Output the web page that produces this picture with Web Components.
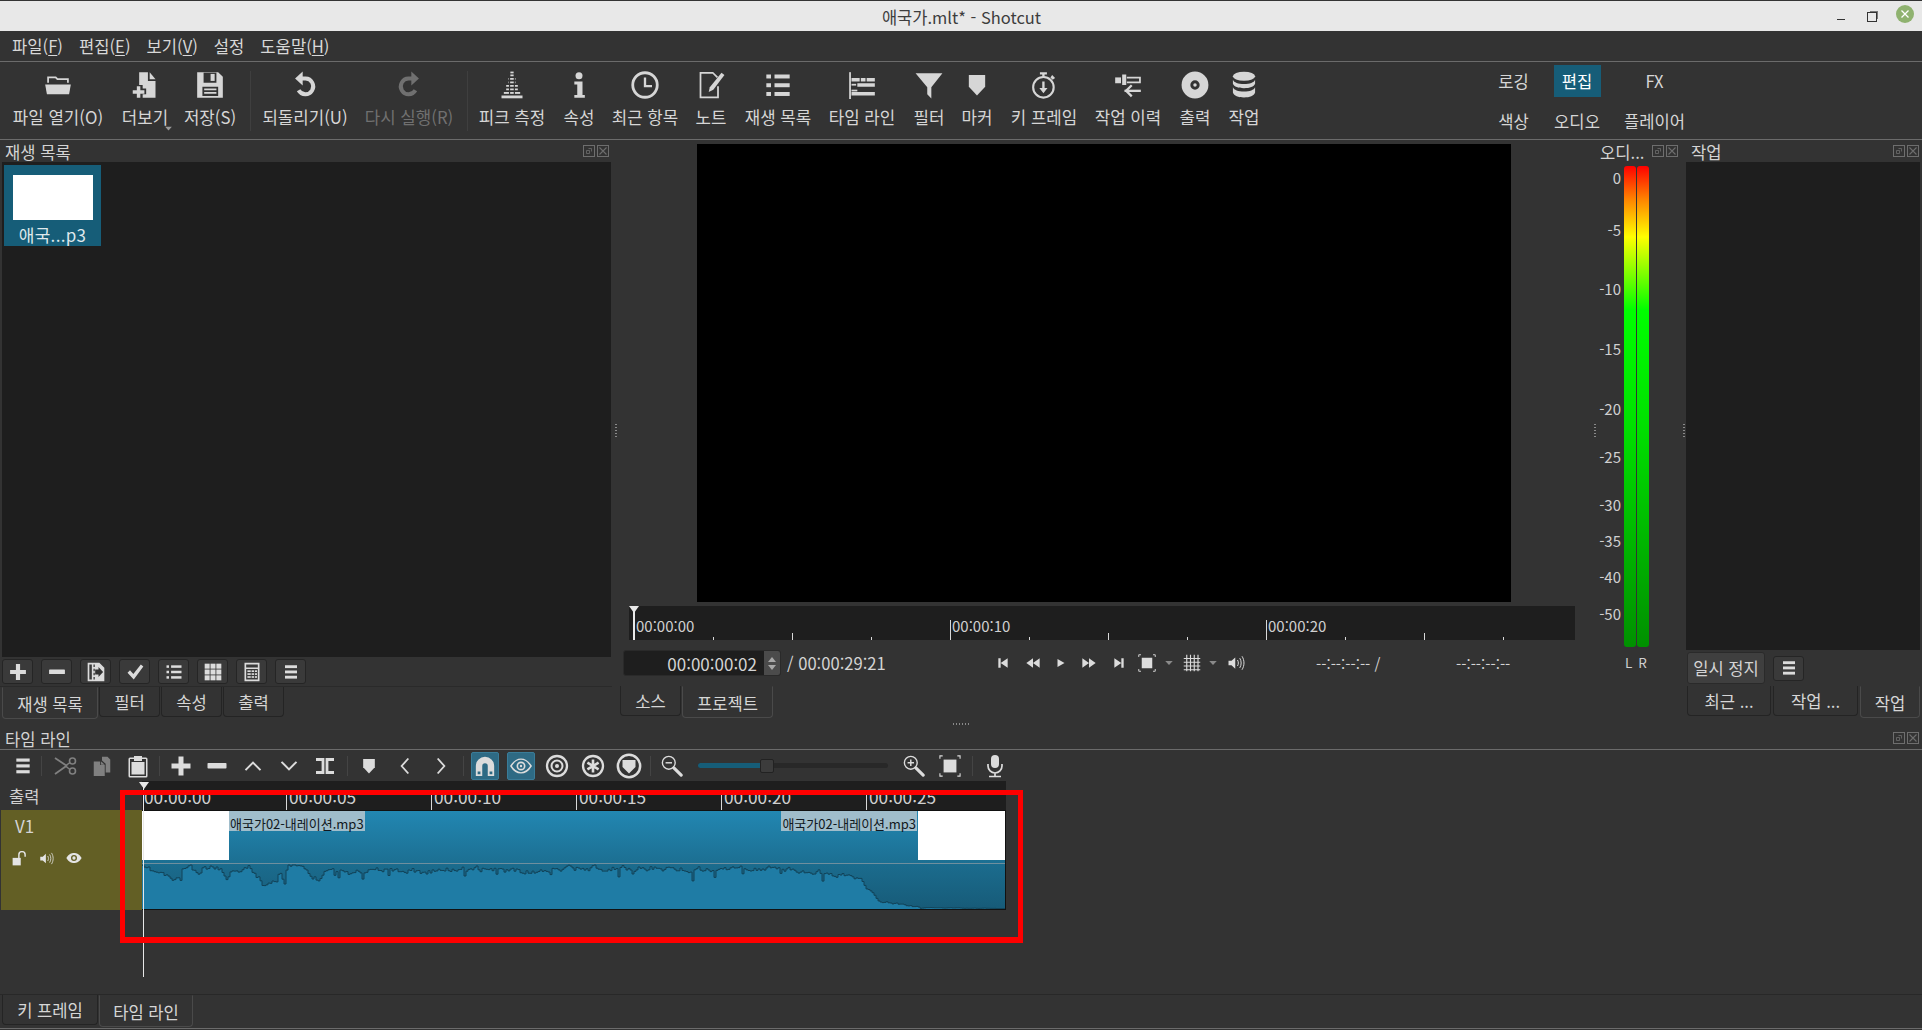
<!DOCTYPE html>
<html lang="ko">
<head>
<meta charset="utf-8">
<title>애국가.mlt* - Shotcut</title>
<style>
  html, body { margin: 0; padding: 0; background: #333; }
  body { width: 1922px; height: 1030px; overflow: hidden; font: 16.6px "Noto Sans CJK KR", "Noto Sans", sans-serif; color: #d4d4d4; }
</style>
</head>
<body>
<shot-app></shot-app>

<script>
// icons on a 24 box, currentColor
const rects = list => list.map(r => `<rect x="${r[0]}" y="${r[1]}" width="${r[2]}" height="${r[3]}"/>`).join('');
const ICONS = {
  folder: '<path d="M3.5 10V5.5h6.5l1.5 1.5h9V10" fill="none" stroke="currentColor" stroke-width="1.5"/><path d="M1 11.5h22l-1.5 8.5h-19z"/>',
  fileadd: '<path d="M7 1h7.5v7.5H21V23H10v-3h3v-5h-3v-3H7z"/><path d="M16 1l5 6h-5z"/><path d="M5 13h3v3.5h3.5v3H8V23H5v-3.500H1.500v-3H5z"/>',
  save: '<path fill-rule="evenodd" d="M1 1h18l4 4v18H1zM6.500 1.500V10h11V1.500zM5.500 13.500V21.500h13.500V13.500z"/><rect x="12.500" y="2.500" width="3.500" height="6"/><rect x="7" y="15" width="10.500" height="1.500"/><rect x="7" y="18" width="10.500" height="1.500"/>',
  undo: '<path d="M9 6.500h3.500a6.700 6.700 0 1 1-6 10" fill="none" stroke="currentColor" stroke-width="3.400"/><path d="M10 0.500V12.500L3.500 6.500z"/>',
  redo: '<g transform="matrix(-1 0 0 1 24 0)"><path d="M9 6.500h3.500a6.700 6.700 0 1 1-6 10" fill="none" stroke="currentColor" stroke-width="3.400"/><path d="M10 0.500V12.500L3.500 6.500z"/></g>',
  peak: rects([[3,21,18,2.400],[5,18,14,1.600],[7,15,10,1.500],[7,12,10,1.500],[9,9,6,1.500],[9,6,6,1.500],[10.600,3,2.800,1.500],[10.600,0.500,2.800,1.500]]) + '<g fill="#333"><rect x="9.400" y="5" width="1" height="15"/><rect x="13.500" y="5" width="1" height="15"/></g>',
  info: '<circle cx="12" cy="4" r="3"/><path d="M8 9h7v11.500h2V23H8v-2.500h2.500v-9H8z"/>',
  clock: '<circle cx="12" cy="12" r="10.500" fill="none" stroke="currentColor" stroke-width="2.400"/><path d="M12 5.500V13h6" fill="none" stroke="currentColor" stroke-width="2"/>',
  note: '<path d="M18 13v9.500H3V1.500h10.500l4 4" fill="none" stroke="currentColor" stroke-width="1.500"/><path d="M21 1.500l2.500 2L14 16l-4 2 1-4z"/>',
  playlist: rects([[2,3,4,3.400],[9,3,13,3.400],[2,10.500,4,3.400],[9,10.500,13,3.400],[2,18,4,3.400],[9,18,13,3.400]]),
  timeline: rects([[1,1,1.500,23],[3,6,7,3],[11,6,4,3],[16,6,7,3],[3,11,4,1.500],[8,10.500,15,3],[3,16,5,1.500],[3,18,20,3]]),
  filter: '<path d="M0.500 2h23L14 14v9.500L10.500 20v-6z"/>',
  marker: '<path d="M5 3.500h14v10l-7 7.500-7-7.500z"/>',
  stopwatch: '<circle cx="11.500" cy="14" r="8.800" fill="none" stroke="currentColor" stroke-width="1.800"/><path d="M8.500 1h6v2h-2v2h-2V3h-2zM19 3.500l2.500 2.500-2 1.500-2-2z"/><path d="M10.500 9h2v5.500H15L11.500 19 8 14.500h2.500z"/>',
  history: '<path d="M1 5.500h5v5H1z"/><path d="M7 3h3.500v9H7z"/><path d="M11 5h12v1.500H11zM11 9h12v1.500H11zM23 5v5.500h-1.500V5z"/><path d="M9 16h14v2H9z"/><path d="M14.500 11.500l1.400 1.400L11.800 17l4.100 4.100-1.400 1.400L9 17z"/>',
  disc: '<path fill-rule="evenodd" d="M12 0.500a11.500 11.500 0 1 0 0 23a11.500 11.500 0 1 0 0-23zM12 8a4 4 0 1 1 0 8a4 4 0 1 1 0-8z"/><circle cx="12" cy="12" r="1.500"/>',
  jobs: '<ellipse cx="12" cy="4.500" rx="9.500" ry="3.800"/><path d="M2.500 7.500c1 2.500 4.500 3.600 9.500 3.600s8.500-1.100 9.500-3.600v3.500c-1 2.600-4.500 3.800-9.500 3.800S3.500 13.600 2.500 11z"/><path d="M2.500 14c1 2.500 4.500 3.600 9.500 3.600s8.500-1.100 9.500-3.600v4.500c-1 3-4.500 4.200-9.500 4.200s-8.500-1.200-9.500-4.200z"/>',
  plus: '<path d="M9.500 2.500h5v7h7v5h-7v7h-5v-7h-7v-5h7z"/>',
  minus: '<rect x="2.500" y="9" width="19" height="5.500" rx="0.800"/>',
  menu: rects([[4,3,16,3.800],[4,10,16,3.800],[4,17,16,3.800]]),
  update: '<path fill-rule="evenodd" d="M2 1h14l6 6v16H2zM4 3v18h3V3z"/><g fill="#333"><path d="M9 3h1.500v3H9zM9 8h1.500v3H9zM9 13h1.500v3H9zM9 18h1.500v3H9z"/><path d="M11 9h4V6l5.500 6-5.500 6v-3h-4z"/></g>',
  check: '<path d="M3 13l3-3 4 4.500L19 3l3 2.500L10.500 21z"/>',
  list: rects([[3,4,3,3],[8.500,4,12.500,3],[3,10.500,3,3],[8.500,10.500,12.500,3],[3,17,3,3],[8.500,17,12.500,3]]),
  grid3: rects([[2,2,6,6],[9,2,6,6],[16,2,6,6],[2,9,6,6],[9,9,6,6],[16,9,6,6],[2,16,6,6],[9,16,6,6],[16,16,6,6]]),
  table: '<path fill-rule="evenodd" d="M3 1h18v22H3zM5 3v3.500h14V3zM5 8.500V21h14V8.500z"/>' + rects([[6.500,10,4,2],[11.500,10,3,2],[15.500,10,2.500,2],[6.500,13.500,4,2],[11.500,13.500,3,2],[15.500,13.500,2.500,2],[6.500,17,4,2],[11.500,17,3,2],[15.500,17,2.500,2]]),
  first: '<path d="M4 4h4v16H4zM20 4v16L8 12z"/>',
  rewind: '<path d="M12 5v14L2 12zM22 5v14l-10-7z"/>',
  play: '<path d="M6 5l12 7-12 7z"/>',
  ff: '<path d="M2 5l10 7-10 7zM12 5l10 7-10 7z"/>',
  last: '<path d="M4 4l12 8-12 8zM16 4h4v16h-4z"/>',
  fit: '<rect x="5" y="5" width="14" height="14"/><path d="M1 4V1h3M20 1h3v3M23 20v3h-3M4 23H1v-3" fill="none" stroke="currentColor" stroke-width="1.200"/>',
  lines: '<path d="M1 6h22M1 11h22M1 16h22M1 21h22M5 1v22M10 1v22M15 1v22M20 1v22" fill="none" stroke="currentColor" stroke-width="1.500"/>',
  volume: '<path d="M2 9h4l5-4.500v15L6 15H2z"/><path d="M14 8c1.500 2.500 1.500 5.500 0 8M17 5.500c2.500 4 2.500 9 0 13M20 3c3.500 5.500 3.500 12.500 0 18" fill="none" stroke="currentColor" stroke-width="1.300"/>',
  caret: '<path d="M3 7h18l-9 10z"/>',
  scissors: '<path d="M1 4l12 8M1 20l12-8.500" fill="none" stroke="currentColor" stroke-width="1.800"/><circle cx="18.500" cy="7" r="3" fill="none" stroke="currentColor" stroke-width="1.600"/><circle cx="18.500" cy="17" r="3" fill="none" stroke="currentColor" stroke-width="1.600"/><path d="M12 11.500l4-3M12 12.500l4 3" fill="none" stroke="currentColor" stroke-width="1.500"/>',
  copy: '<path d="M3 7h7v4h5v12H3z"/><path d="M11 7l4 3.500h-4z"/><path d="M12 2h6l3 3v14h-5V9.500L12 6z"/>',
  paste: '<path fill-rule="evenodd" d="M4 3.500h4V2h8v1.500h4a1.500 1.500 0 0 1 1.500 1.500v17a1.500 1.500 0 0 1-1.500 1.500H4A1.500 1.500 0 0 1 2.500 22V5A1.500 1.500 0 0 1 4 3.500zM4 5v17h16V5h-4v2H8V5z"/><rect x="5.500" y="8" width="13" height="12.500"/>',
  up: '<path d="M3 17l9-9 9 9" fill="none" stroke="currentColor" stroke-width="2.400"/>',
  down: '<path d="M3 7l9 9 9-9" fill="none" stroke="currentColor" stroke-width="2.400"/>',
  left: '<path d="M16 3l-8 9 8 9" fill="none" stroke="currentColor" stroke-width="2.200"/>',
  right: '<path d="M8 3l8 9-8 9" fill="none" stroke="currentColor" stroke-width="2.200"/>',
  split: '<path d="M3 5.500h7v13H3M21 5.500h-7v13h7" fill="none" stroke="currentColor" stroke-width="2.800"/>',
  magnet: '<path fill-rule="evenodd" d="M2 12a10 10 0 0 1 20 0v11h-7V12a3 3 0 0 0-6 0v11H2z"/><g fill="#2e6a84"><rect x="4" y="18" width="3" height="3"/><rect x="17" y="18" width="3" height="3"/></g>',
  ripple: '<path d="M1 12c4-6.500 7.500-7.500 11-7.500s7 1 11 7.500c-4 6.500-7.500 7.500-11 7.500S5 18.500 1 12z" fill="none" stroke="currentColor" stroke-width="1.600"/><circle cx="12" cy="12" r="4" fill="none" stroke="currentColor" stroke-width="1.800"/><circle cx="12" cy="12" r="1.300"/>',
  target: '<circle cx="12" cy="12" r="10" fill="none" stroke="currentColor" stroke-width="2.300"/><circle cx="12" cy="12" r="5.500" fill="none" stroke="currentColor" stroke-width="2"/><circle cx="12" cy="12" r="2"/>',
  asterisk: '<circle cx="12" cy="12" r="10" fill="none" stroke="currentColor" stroke-width="2.300"/><path d="M12 5.500v13M6.400 8.700l11.200 6.600M6.400 15.300l11.200-6.600" fill="none" stroke="currentColor" stroke-width="2.600"/>',
  shieldring: '<circle cx="12" cy="12" r="10.300" fill="none" stroke="currentColor" stroke-width="2.300"/><path d="M6 6.500h12v6.500l-6 6-6-6z"/>',
  zoomout: '<circle cx="8.500" cy="8.500" r="7" fill="none" stroke="currentColor" stroke-width="1.500"/><rect x="5" y="7.700" width="7" height="1.600"/><path d="M14 14l8 8" stroke="currentColor" stroke-width="3.400" stroke-linecap="round"/>',
  zoomin: '<circle cx="8.500" cy="8.500" r="7" fill="none" stroke="currentColor" stroke-width="1.500"/><path d="M5 7.700h2.700V5h1.600v2.700H12v1.600H9.300V12H7.700V9.300H5z"/><path d="M14 14l8 8" stroke="currentColor" stroke-width="3.400" stroke-linecap="round"/>',
  mic: '<rect x="8" y="1" width="8" height="13" rx="4"/><path d="M5 10v2a7 7 0 0 0 14 0v-2M12 19v3M6 22.500h12" fill="none" stroke="currentColor" stroke-width="1.700"/>',
  lock: '<rect x="1" y="11" width="13" height="12"/><path d="M11 11V6a5 5 0 0 1 10 0v3" fill="none" stroke="currentColor" stroke-width="2.300"/>',
  eye: '<path fill-rule="evenodd" d="M0.500 12C4 6 8 4.500 12 4.500S20 6 23.500 12C20 18 16 19.500 12 19.500S4 18 0.500 12zM12 7.500a4.500 4.500 0 1 0 0 9a4.500 4.500 0 1 0 0-9z"/><circle cx="12" cy="12" r="2.500"/>',
  float: '<rect x="0.500" y="0.500" width="11" height="11" fill="none" stroke="currentColor"/><path d="M3.500 5.500h3v3h-3zM5.500 3.500h3v3" fill="none" stroke="currentColor" stroke-width="0.800"/>',
  close: '<rect x="0.500" y="0.500" width="11" height="11" fill="none" stroke="currentColor"/><path d="M2.500 2.500l7 7M9.500 2.500l-7 7" fill="none" stroke="currentColor" stroke-width="1.100"/>'
};

class ShotIcon extends HTMLElement {
  connectedCallback() {
    const size = this.getAttribute('size') || 24;
    const box = this.getAttribute('box') || 24;
    this.attachShadow({mode: 'open'}).innerHTML = `
      <style>:host { display: inline-flex; line-height: 0; } svg { fill: currentColor; }</style>
      <svg width="${size}" height="${size}" viewBox="0 0 ${box} ${box}">${ICONS[this.getAttribute('name')] || ''}</svg>`;
  }
}
customElements.define('shot-icon', ShotIcon);

class TitleBar extends HTMLElement {
  constructor() {
    super();
    this.attachShadow({mode: 'open'}).innerHTML = `
      <style>
        :host { display: grid; grid-template-columns: 1fr auto 1fr; align-items: center; height: 30px; border-top: 1px solid #333; background: #e8e8e8; color: #3d3d3d; font-size: 16.5px; padding-left: 1px; }
        .text { grid-column: 2; position: relative; top: 1px; }
        .btns { grid-column: 3; display: flex; justify-content: flex-end; align-items: center; gap: 12px; padding-right: 8px; }
        .min { width: 8px; height: 1px; background: #333; margin: 7px 10px 0 0; }
        .max { width: 8px; height: 8px; border: 1px solid #333; box-shadow: 2px -2px 0 -1px #777; margin: 2px 3px 0 0; }
        .close { width: 18px; height: 18px; border-radius: 50%; background: #8fb26f; color: #fff; display: grid; place-items: center; margin-left: 4px; margin-top: -4px; }
      </style>
      <span class="text"><slot></slot></span>
      <div class="btns">
        <div class="min"></div><div class="max"></div>
        <div class="close"><svg width="10" height="10" viewBox="0 0 10 10"><path d="M1.500 1.500l7 7M8.500 1.500l-7 7" stroke="#fff" stroke-width="1.300"/></svg></div>
      </div>`;
  }
}
customElements.define('title-bar', TitleBar);

class MenuBar extends HTMLElement {
  constructor() {
    super();
    this.attachShadow({mode: 'open'}).innerHTML = `
      <style>
        :host { display: flex; height: 30px; align-items: center; padding-left: 12px; gap: 16px; border-bottom: 1px solid #6b6b6b; font-size: 16.6px; color: #d8d8d8; }
        u { text-underline-offset: 2px; }
      </style>
      <span>파일(<u>F</u>)</span><span>편집(<u>E</u>)</span><span>보기(<u>V</u>)</span><span>설정</span><span>도움말(<u>H</u>)</span>`;
  }
}
customElements.define('menu-bar', MenuBar);

class ToolItem extends HTMLElement {
  constructor() {
    super();
    const off = this.hasAttribute('disabled');
    const more = this.hasAttribute('more');
    this.attachShadow({mode: 'open'}).innerHTML = `
      <style>
        :host { display: flex; flex-direction: column; align-items: center; padding-top: 9px; position: relative; color: ${off ? '#707070' : '#d6d6d6'}; font-size: 16.8px; white-space: nowrap; }
        .lbl { height: 20px; line-height: 20px; margin-top: 8px; }
        .caret { position: absolute; left: 50px; top: 62px; color: #9a9a9a; }
      </style>
      <shot-icon name="${this.getAttribute('icon')}" size="28"></shot-icon>
      <span class="lbl">${this.getAttribute('label')}</span>
      ${more ? '<shot-icon class="caret" name="caret" size="9"></shot-icon>' : ''}`;
  }
}
customElements.define('tool-item', ToolItem);

class ToolSep extends HTMLElement {
  constructor() {
    super();
    this.attachShadow({mode: 'open'}).innerHTML = `
      <style>:host { display: flex; justify-content: center; padding-top: 9px; height: 60px; } i { width: 1px; background: #3f3f3f; }</style><i></i>`;
  }
}
customElements.define('tool-sep', ToolSep);

class MainToolbar extends HTMLElement {
  constructor() {
    super();
    this.attachShadow({mode: 'open'}).innerHTML = `
      <style>
        :host { display: grid; height: 77px; padding-left: 2px; border-bottom: 1px solid #6b6b6b;
          grid-template-columns: 112px 62px 68px 12px 98px 110px 6px 84px 50px 82px 50px 84px 84px 50px 46px 88px 80px 54px 44px 223.500px auto; }
        .persp { display: grid; grid-template-columns: 48px 47px 76px; grid-auto-rows: 32px; column-gap: 16px; row-gap: 8px; padding-top: 3px; font-size: 16.6px; color: #d6d6d6; }
        .persp span { display: grid; place-items: center; white-space: nowrap; }
        .persp .on { background: #165d78; color: #fff; }
      </style>
      <tool-item icon="folder" label="파일 열기(O)"></tool-item>
      <tool-item icon="fileadd" label="더보기" more></tool-item>
      <tool-item icon="save" label="저장(S)"></tool-item>
      <tool-sep></tool-sep>
      <tool-item icon="undo" label="되돌리기(U)"></tool-item>
      <tool-item icon="redo" label="다시 실행(R)" disabled></tool-item>
      <tool-sep></tool-sep>
      <tool-item icon="peak" label="피크 측정"></tool-item>
      <tool-item icon="info" label="속성"></tool-item>
      <tool-item icon="clock" label="최근 항목"></tool-item>
      <tool-item icon="note" label="노트"></tool-item>
      <tool-item icon="playlist" label="재생 목록"></tool-item>
      <tool-item icon="timeline" label="타임 라인"></tool-item>
      <tool-item icon="filter" label="필터"></tool-item>
      <tool-item icon="marker" label="마커"></tool-item>
      <tool-item icon="stopwatch" label="키 프레임"></tool-item>
      <tool-item icon="history" label="작업 이력"></tool-item>
      <tool-item icon="disc" label="출력"></tool-item>
      <tool-item icon="jobs" label="작업"></tool-item>
      <div></div>
      <div class="persp">
        <span>로깅</span><span class="on">편집</span><span>FX</span>
        <span>색상</span><span>오디오</span><span>플레이어</span>
      </div>`;
  }
}
customElements.define('main-toolbar', MainToolbar);

class DockTitle extends HTMLElement {
  constructor() {
    super();
    this.attachShadow({mode: 'open'}).innerHTML = `
      <style>
        :host { display: flex; align-items: center; justify-content: space-between; height: 20px; padding: 2px 3px 0 5px; font-size: 16.6px; color: #d4d4d4; }
        .ic { display: flex; gap: 2px; color: #6e6e6e; margin-top: -2px; }
      </style>
      <slot></slot>
      <span class="ic"><shot-icon name="float" size="12" box="12"></shot-icon><shot-icon name="close" size="12" box="12"></shot-icon></span>`;
  }
}
customElements.define('dock-title', DockTitle);

class TabBar extends HTMLElement {
  constructor() {
    super();
    this.attachShadow({mode: 'open'}).innerHTML = `
      <style>:host { display: flex; gap: 1px; align-items: flex-start; height: 32px; }</style><slot></slot>`;
  }
}
customElements.define('tab-bar', TabBar);

class TabItem extends HTMLElement {
  constructor() {
    super();
    const w = this.getAttribute('w');
    const on = this.hasAttribute('active');
    this.attachShadow({mode: 'open'}).innerHTML = `
      <style>
        :host { display: grid; place-items: center; box-sizing: border-box; width: ${w}px; height: ${on ? 32 : 30}px; padding-top: ${on ? 1 : 0}px; font-size: 16.6px; color: #d6d6d6;
          border: 1px solid ${on ? '#4a4a4a' : '#242424'}; border-top: ${on ? '1px solid #333' : '0'}; border-radius: 0 0 4px 4px; white-space: nowrap; }
      </style><slot></slot>`;
  }
}
customElements.define('tab-item', TabItem);

class SquareBtn extends HTMLElement {
  constructor() {
    super();
    const s = this.getAttribute('size') || 20;
    this.attachShadow({mode: 'open'}).innerHTML = `
      <style>
        :host { display: grid; place-items: center; box-sizing: border-box; width: 31px; height: 25px; background: #3a3a3a; border: 1px solid #252525; border-radius: 3px; color: #dcdcdc; }
      </style>
      <shot-icon name="${this.getAttribute('icon')}" size="${s}"></shot-icon>`;
  }
}
customElements.define('square-btn', SquareBtn);

class PlaylistDock extends HTMLElement {
  constructor() {
    super();
    this.attachShadow({mode: 'open'}).innerHTML = `
      <style>
        :host { display: flex; flex-direction: column; height: 580px; }
        .list { box-sizing: border-box; height: 495px; margin: 0 1px 0 2px; background: #1e1e1e; padding: 3px 0 0 2px; }
        .thumb { width: 97px; height: 81px; background: #165d78; display: flex; flex-direction: column; align-items: center; color: #dfe8ec; font-size: 17px; }
        .thumb i { display: block; width: 80px; height: 45px; margin-top: 10px; background: #fff; }
        .thumb span { margin-top: 5px; line-height: 20px; letter-spacing: 0.3px; }
        .btns { display: flex; gap: 8px; height: 27px; padding: 2px 0 0 2px; border-bottom: 1px solid #2a2a2a; }
        tab-bar { padding-left: 2px; }
      </style>
      <dock-title>재생 목록</dock-title>
      <div class="list"><div class="thumb"><i></i><span>애국...p3</span></div></div>
      <div class="btns">
        <square-btn icon="plus"></square-btn><square-btn icon="minus"></square-btn><square-btn icon="update"></square-btn><square-btn icon="check"></square-btn>
        <square-btn icon="list"></square-btn><square-btn icon="grid3"></square-btn><square-btn icon="table"></square-btn><square-btn icon="menu" size="18"></square-btn>
      </div>
      <tab-bar><tab-item w="96" active>재생 목록</tab-item><tab-item w="61">필터</tab-item><tab-item w="61">속성</tab-item><tab-item w="61">출력</tab-item></tab-bar>`;
  }
}
customElements.define('playlist-dock', PlaylistDock);

class ScrubRuler extends HTMLElement {
  constructor() {
    super();
    let marks = '';
    for (let i = 0; i < 12; i++) {
      const x = 5 + i * 79;
      const h = i % 4 === 0 ? 20 : (i % 2 === 0 ? 7 : 3);
      marks += `<i style="left:${x}px;height:${h}px"></i>`;
      if (i % 4 === 0) marks += `<span style="left:${x + 2}px">00:00:${String(i * 2.5).padStart(2, '0')}</span>`;
    }
    this.attachShadow({mode: 'open'}).innerHTML = `
      <style>
        :host { display: block; position: relative; height: 34px; background: #1e1e1e; margin: 0 16px 0 9px; overflow: hidden; }
        i { position: absolute; bottom: 0; width: 1px; background: #d8d8d8; }
        span { position: absolute; top: 10px; font-size: 15px; line-height: 20px; color: #d0d0d0; }
        .head { position: absolute; left: 4px; top: 0; width: 2px; height: 34px; background: #e8e8e8; }
        .tri { position: absolute; left: 0px; top: 0; width: 0; height: 0; border-left: 5px solid transparent; border-right: 5px solid transparent; border-top: 7px solid #e8e8e8; }
      </style>${marks}<b class="head"></b><b class="tri"></b>`;
  }
}
customElements.define('scrub-ruler', ScrubRuler);

class PlayerPanel extends HTMLElement {
  constructor() {
    super();
    this.attachShadow({mode: 'open'}).innerHTML = `
      <style>
        :host { display: flex; flex-direction: column; height: 580px; padding-top: 4px; box-sizing: border-box; }
        .video { width: 814px; height: 458px; background: #000; margin: 0 0 4px 77px; }
        .ctl { display: flex; align-items: center; height: 26px; margin-top: 10px; color: #d4d4d4; }
        .tc { box-sizing: border-box; display: flex; width: 158px; height: 26px; margin-left: 3px; background: #1e1e1e; border: 1px solid #2a2a2a; border-radius: 3px; align-items: center; justify-content: flex-end; overflow: hidden; }
        .tc b { font-weight: normal; padding-right: 7px; font-size: 17px; }
        .spin { width: 16px; height: 100%; background: #4b4b4b; display: flex; flex-direction: column; align-items: center; justify-content: center; gap: 3px; }
        .spin i { width: 0; height: 0; border-left: 4px solid transparent; border-right: 4px solid transparent; }
        .spin .u { border-bottom: 5px solid #a8a8a8; } .spin .d { border-top: 5px solid #a8a8a8; }
        .dur { width: 207px; padding-left: 6px; box-sizing: border-box; font-size: 16.6px; white-space: nowrap; }
        .tr { display: grid; grid-template-columns: 30px 29px 27px 30px 30px 26px 18px 27px 16px 30px; justify-items: center; align-items: center; color: #dcdcdc; }
        .tr .c { color: #8a8a8a; }
        .t1 { margin-left: 65px; width: 140px; font-size: 15px; white-space: nowrap; }
        .t2 { font-size: 15px; }
        tab-bar { margin-top: 10px; }
      </style>
      <div class="video"></div>
      <scrub-ruler></scrub-ruler>
      <div class="ctl">
        <div class="tc"><b>00:00:00:02</b><div class="spin"><i class="u"></i><i class="d"></i></div></div>
        <div class="dur">/ 00:00:29:21</div>
        <div class="tr">
          <shot-icon name="first" size="14"></shot-icon><shot-icon name="rewind" size="16"></shot-icon><shot-icon name="play" size="14"></shot-icon><shot-icon name="ff" size="16"></shot-icon><shot-icon name="last" size="14"></shot-icon>
          <shot-icon name="fit" size="18"></shot-icon><shot-icon class="c" name="caret" size="10"></shot-icon><shot-icon name="lines" size="18"></shot-icon><shot-icon class="c" name="caret" size="10"></shot-icon><shot-icon name="volume" size="18"></shot-icon>
        </div>
        <div class="t1">--:--:--:-- /</div><div class="t2">--:--:--:--</div>
      </div>
      <tab-bar><tab-item w="61">소스</tab-item><tab-item w="91" active>프로젝트</tab-item></tab-bar>`;
  }
}
customElements.define('player-panel', PlayerPanel);

class AudioMeter extends HTMLElement {
  constructor() {
    super();
    const ticks = [[0,178],[-5,230],[-10,289],[-15,349],[-20,409],[-25,457],[-30,505],[-35,541],[-40,577],[-50,614]];
    const labels = ticks.map(t => `<span style="top:${t[1] - 166 - 10}px">${t[0]}</span>`).join('');
    this.attachShadow({mode: 'open'}).innerHTML = `
      <style>
        :host { display: block; height: 580px; }
        .scale { position: relative; height: 481px; margin-top: 4px; display: flex; gap: 1px; padding-left: 25px; }
        .scale span { position: absolute; right: 61px; line-height: 20px; font-size: 15px; color: #d0d0d0; }
        .bar { width: 12px; height: 481px; border-radius: 3px;
          background: linear-gradient(#ff0000 0, #ff8a00 35px, #ffff00 71px, #00ff00 144px, #00e000 260px, #009000 481px); }
        .lr { display: flex; gap: 6px; padding-left: 26px; font-size: 13.500px; line-height: 20px; margin-top: 5px; color: #d0d0d0; }
        .title { display: flex; justify-content: space-between; height: 20px; padding: 2px 4px 0 1px; align-items: center; }
        .ic { display: flex; gap: 2px; color: #6e6e6e; margin-top: -2px; }
      </style>
      <div class="title"><span>오디...</span><span class="ic"><shot-icon name="float" size="12" box="12"></shot-icon><shot-icon name="close" size="12" box="12"></shot-icon></span></div>
      <div class="scale">${labels}<div class="bar"></div><div class="bar"></div></div>
      <div class="lr"><span>L</span><span>R</span></div>`;
  }
}
customElements.define('audio-meter', AudioMeter);

class JobsDock extends HTMLElement {
  constructor() {
    super();
    this.attachShadow({mode: 'open'}).innerHTML = `
      <style>
        :host { display: flex; flex-direction: column; height: 580px; }
        .pane { height: 488px; background: #1e1e1e; margin-right: 2px; }
        .row { display: flex; align-items: center; gap: 8px; height: 36px; padding-left: 1px; }
        .pause { box-sizing: border-box; width: 78px; height: 32px; background: #3f3f3f; border: 1px solid #2a2a2a; border-radius: 3px; display: grid; place-items: center; font-size: 16.6px; white-space: nowrap; }
        tab-bar { padding-left: 1px; gap: 2px; }
      </style>
      <dock-title>작업</dock-title>
      <div class="pane"></div>
      <div class="row"><div class="pause">일시 정지</div><square-btn icon="menu" size="18"></square-btn></div>
      <tab-bar><tab-item w="84">최근 ...</tab-item><tab-item w="85">작업 ...</tab-item><tab-item w="60" active>작업</tab-item></tab-bar>`;
  }
}
customElements.define('jobs-dock', JobsDock);

// splitter grip, dots along the axis
class SplitGrip extends HTMLElement {
  constructor() {
    super();
    const v = this.hasAttribute('vertical');
    this.attachShadow({mode: 'open'}).innerHTML = `
      <style>
        :host { display: flex; align-items: center; justify-content: center; }
        i { display: block; width: ${v ? 2 : 16}px; height: ${v ? 14 : 2}px;
          background: repeating-linear-gradient(${v ? '180deg' : '90deg'}, #8a8a8a 0 1px, transparent 1px 3px); }
      </style><i></i>`;
  }
}
customElements.define('split-grip', SplitGrip);

class TimelineToolbar extends HTMLElement {
  constructor() {
    super();
    const ic = (n, s, extra) => `<span class="cell ${extra || ''}"><shot-icon name="${n}" size="${s}"></shot-icon></span>`;
    this.attachShadow({mode: 'open'}).innerHTML = `
      <style>
        :host { display: flex; align-items: center; height: 31px; padding-left: 5px; color: #dcdcdc; background: #333; }
        .cell { width: 36px; display: grid; place-items: center; flex: none; }
        .off { color: #808080; }
        .sep { width: 1px; height: 20px; background: #444; margin: 0 3.500px; flex: none; }
        .on { width: 28px; height: 28px; margin: 0 4px; box-sizing: border-box; background: #2e6a84; border: 1px solid #3a7c98; border-radius: 2px; }
        .on + .on { margin-left: 4px; }
        .slider { position: relative; width: 190px; height: 5px; margin: 0 7.500px 0 8px; background: #282828; border-radius: 3px; flex: none; }
        .slider b { position: absolute; left: 0; top: 0; width: 66px; height: 5px; background: #165d78; border-radius: 3px; }
        .slider i { position: absolute; left: 62px; top: -4px; width: 12px; height: 12px; background: #3c3c3c; border: 1px solid #222; border-radius: 2px; }
      </style>
      ${ic('menu', 20)}<span class="sep" style="margin:0 6px 0 0"></span>
      ${ic('scissors', 24, 'off')}${ic('copy', 22, 'off')}${ic('paste', 24)}<span class="sep" style="margin:0 3px"></span>
      ${ic('plus', 24)}${ic('minus', 24)}${ic('up', 20)}${ic('down', 20)}${ic('split', 24)}<span class="sep"></span>
      ${ic('marker', 20)}${ic('left', 20)}${ic('right', 20)}<span class="sep"></span>
      ${ic('magnet', 22, 'on')}${ic('ripple', 22, 'on')}
      ${ic('target', 24)}${ic('asterisk', 24)}${ic('shieldring', 26)}<span class="sep" style="margin:0 3px"></span>
      ${ic('zoomout', 22)}
      <span class="slider"><b></b><i></i></span>
      ${ic('zoomin', 22)}${ic('fit', 22)}<span class="sep" style="margin:0 4px"></span>${ic('mic', 24)}`;
  }
}
customElements.define('timeline-toolbar', TimelineToolbar);

class ClipWave extends HTMLElement {
  constructor() {
    super();
    const W = 864, H = 45, x0 = 142, y0 = 865;
    // rough outline read off the reference: [x, y] in window pixels
    const anchors = [[142,868],[160,873],[170,878],[180,880],[182,868],[190,866],[197,876],[203,868],[217,866],[227,877],[233,868],[250,867],[263,884],[277,877],[279,867],[284,884],[287,866],[300,866],[310,876],[317,878],[327,867],[350,874],[370,869],[420,871],[470,868],[520,871],[570,868],[640,867],[700,869],[780,868],[807,870],[833,873],[860,877],[865,887],[873,895],[880,902],[900,905],[920,908.500],[1005,909.500]];
    const base = x => {
      for (let i = 1; i < anchors.length; i++) {
        if (x <= anchors[i][0]) {
          const a = anchors[i - 1], b = anchors[i];
          return a[1] + (b[1] - a[1]) * (x - a[0]) / (b[0] - a[0]);
        }
      }
      return 909.500;
    };
    let seed = 11, walk = 0;
    const rnd = () => (seed = (seed * 16807) % 2147483647) / 2147483647;
    let line = '';
    for (let x = x0; x <= x0 + W; x += 2) {
      const amp = x > 920 ? 0.200 : (x > 860 ? 1.200 : 3);
      walk = walk * 0.55 + (rnd() - 0.350) * amp * 1.600;
      let y = base(x) + walk;
      if (x < 860 && x > 330 && rnd() > 0.920) y += 3 + rnd() * 7;
      y = Math.min(H - 0.500, Math.max(1, y - y0));
      const lx = x - x0;
      line += line ? `H${lx}V${y.toFixed(1)}` : `M0 ${y.toFixed(1)}`;
    }
    this.attachShadow({mode: 'open'}).innerHTML = `
      <style>:host { display: block; height: ${H}px; line-height: 0; background: linear-gradient(#1b6c8e, #175b78); }</style>
      <svg width="${W}" height="${H}" viewBox="0 0 ${W} ${H}">
        <path d="${line}V${H}H0Z" fill="#1f7ca5"/>
        <path d="${line}" fill="none" stroke="#124358" stroke-width="1"/>
      </svg>`;
  }
}
customElements.define('clip-wave', ClipWave);

class TimelineBody extends HTMLElement {
  constructor() {
    super();
    let marks = '';
    for (let i = 0; i < 6; i++) {
      marks += `<i style="left:${i * 145 - 1}px"></i><span style="left:${i * 145 + 2}px">00:00:${String(i * 5).padStart(2, '0')}</span>`;
    }
    this.attachShadow({mode: 'open'}).innerHTML = `
      <style>
        :host { display: grid; grid-template-columns: 142px 864px; grid-template-rows: 29px 100px; height: 213px; position: relative; background: #333; }
        .out { padding: 5px 0 0 9px; font-size: 16.6px; line-height: 20px; color: #d0d0d0; }
        .ruler { position: relative; background: #1e1e1e; overflow: hidden; }
        .ruler i { position: absolute; bottom: 0; width: 1px; height: 20px; background: #d8d8d8; }
        .ruler span { position: absolute; top: 5px; font-size: 17.300px; line-height: 22px; color: #cfcfcf; }
        .head { background: #635f25; padding: 4px 0 0 14px; margin-left: 1px; color: #d4d4d4; font-size: 17px; }
        .head .nm { line-height: 24px; height: 24px; }
        .head .ic { display: flex; align-items: center; gap: 12px; margin: 12px 0 0 -3px; color: #e4e4e4; }
        .clip { background: linear-gradient(#2287b2 0, #1c6f92 52px, #1c6f92 100%); border: 1px solid #111; border-left: 0; box-sizing: border-box; display: flex; flex-direction: column; overflow: hidden; }
        .top { display: flex; height: 49px; }
        .top em { display: block; width: 87px; background: #fff; flex: none; }
        .mid { flex: 1; display: flex; justify-content: space-between; padding-right: 1px; align-items: flex-start; }
        .cap { background: #a0bdcb; color: #101820; font-size: 13px; line-height: 13px; height: 14px; padding: 6px 1px 0; white-space: nowrap; font-style: normal; }
        .sepl { height: 1px; margin-top: 3px; background: #6f8f9e; }
        .ph { position: absolute; left: 143px; top: 1px; width: 1px; height: 195px; background: #e8e8e8; }
        .tri { position: absolute; left: 139px; top: 1px; width: 0; height: 0; border-left: 5px solid transparent; border-right: 5px solid transparent; border-top: 7px solid #e8e8e8; }
        /* the red mark drawn on top of the screenshot */
        .mark { position: absolute; left: 120px; top: 9px; width: 903px; height: 153px; box-sizing: border-box; border: 5px solid #ff0000; border-bottom-width: 6px; }
      </style>
      <div class="out">출력</div>
      <div class="ruler">${marks}</div>
      <div class="head">
        <div class="nm">V1</div>
        <div class="ic"><shot-icon name="lock" size="15"></shot-icon><shot-icon name="volume" size="15"></shot-icon><shot-icon name="eye" size="16"></shot-icon></div>
      </div>
      <div class="clip">
        <div class="top"><em></em><div class="mid"><span class="cap">애국가02-내레이션.mp3</span><span class="cap">애국가02-내레이션.mp3</span></div><em></em></div>
        <div class="sepl"></div>
        <clip-wave></clip-wave>
      </div>
      <div class="ph"></div><div class="tri"></div>
      <div class="mark"></div>`;
  }
}
customElements.define('timeline-body', TimelineBody);

class TimelineDock extends HTMLElement {
  constructor() {
    super();
    this.attachShadow({mode: 'open'}).innerHTML = `
      <style>
        :host { display: flex; flex-direction: column; }
        .rule { height: 1px; background: #6b6b6b; }
        tab-bar { border-top: 1px solid #282828; padding-left: 2px; gap: 1px; }
        .end { height: 1px; border-bottom: 1px solid #6b6b6b; }
      </style>
      <dock-title>타임 라인</dock-title>
      <div class="rule"></div>
      <timeline-toolbar></timeline-toolbar>
      <timeline-body></timeline-body>
      <tab-bar><tab-item w="96">키 프레임</tab-item><tab-item w="94" active>타임 라인</tab-item></tab-bar>
      <div class="end"></div>`;
  }
}
customElements.define('timeline-dock', TimelineDock);

class ShotApp extends HTMLElement {
  constructor() {
    super();
    this.attachShadow({mode: 'open'}).innerHTML = `
      <style>
        :host { display: flex; flex-direction: column; width: 1922px; height: 1030px; }
        .main { display: grid; grid-template-columns: 612px 8px 971px 8px 83px 4px 236px; height: 581px; }
        .hgrip { height: 6px; }
      </style>
      <title-bar>애국가.mlt* - Shotcut</title-bar>
      <menu-bar></menu-bar>
      <main-toolbar></main-toolbar>
      <div class="main">
        <playlist-dock></playlist-dock><split-grip vertical></split-grip>
        <player-panel></player-panel><split-grip vertical></split-grip>
        <audio-meter></audio-meter><split-grip vertical></split-grip>
        <jobs-dock></jobs-dock>
      </div>
      <split-grip class="hgrip"></split-grip>
      <timeline-dock></timeline-dock>`;
  }
}
customElements.define('shot-app', ShotApp);
</script>
</body>
</html>
